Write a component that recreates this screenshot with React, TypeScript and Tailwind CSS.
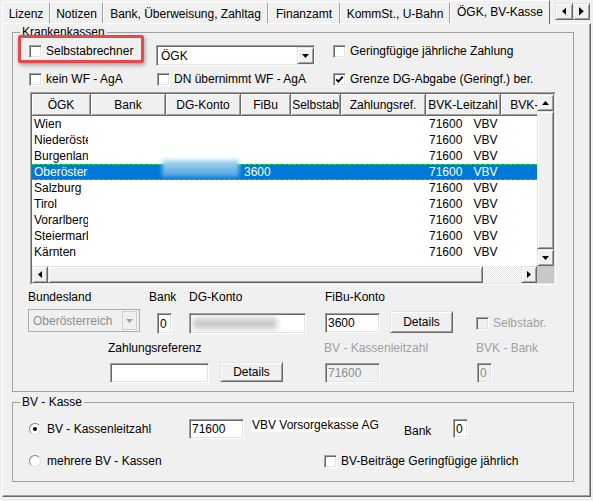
import React from "react";

const raised =
  "bg-[#f0f0f0] border border-t-[#e3e3e3] border-l-[#e3e3e3] border-r-[#696969] border-b-[#696969] shadow-[inset_1px_1px_0_#fff,inset_-1px_-1px_0_#a0a0a0]";
const sunken =
  "border border-t-[#a0a0a0] border-l-[#a0a0a0] border-r-white border-b-white shadow-[inset_1px_1px_0_#696969,inset_-1px_-1px_0_#e3e3e3]";

type Dir = "up" | "down" | "left" | "right";

function Arrow({ dir, big = false, color = "#000" }: { dir: Dir; big?: boolean; color?: string }) {
  const vertical = dir === "up" || dir === "down";
  const pts = {
    up: "0,4 7,4 3.5,0",
    down: "0,0 7,0 3.5,4",
    left: "4,0 4,7 0,3.5",
    right: "0,0 0,7 4,3.5",
  }[dir];
  const w = vertical ? 7 : 4;
  const h = vertical ? 4 : 7;
  const k = big ? 1.2 : 1;
  return (
    <svg width={w * k} height={h * k} viewBox={`0 0 ${w} ${h}`}>
      <polygon points={pts} fill={color} />
    </svg>
  );
}

function CheckBox({ checked = false, disabled = false }: { checked?: boolean; disabled?: boolean }) {
  return (
    <span
      className={`w-[13px] h-[13px] shrink-0 flex items-center justify-center ${sunken} ${
        disabled ? "bg-[#f0f0f0]" : "bg-white"
      }`}
    >
      {checked && (
        <svg width="9" height="9" viewBox="0 0 9 9">
          <path d="M1.2 4.3 L3.4 6.6 L7.8 1.6" fill="none" stroke="#000" strokeWidth="1.8" />
        </svg>
      )}
    </span>
  );
}

function CheckItem({ label, checked, disabled }: { label: string; checked?: boolean; disabled?: boolean }) {
  return (
    <div className="flex items-center h-[14px] whitespace-nowrap">
      <CheckBox checked={checked} disabled={disabled} />
      <span className={`ml-[4px] ${disabled ? "text-[#a0a0a0]" : ""}`}>{label}</span>
    </div>
  );
}

function RadioItem({ label, checked }: { label: string; checked?: boolean }) {
  return (
    <div className="flex items-center h-[14px] whitespace-nowrap">
      <span className="w-[12px] h-[12px] shrink-0 rounded-full bg-white border border-t-[#808080] border-l-[#808080] border-r-[#e3e3e3] border-b-[#e3e3e3] flex items-center justify-center">
        {checked && <span className="w-[4px] h-[4px] rounded-full bg-black" />}
      </span>
      <span className="ml-[6px]">{label}</span>
    </div>
  );
}

const tabs = [
  { label: "Lizenz", w: "w-[48px]" },
  { label: "Notizen", w: "w-[53px]" },
  { label: "Bank, Überweisung, Zahltag", w: "w-[165px]" },
  { label: "Finanzamt", w: "w-[72px]" },
  { label: "KommSt., U-Bahn", w: "w-[110px]" },
];

const cols = [
  { label: "ÖGK", w: "w-[59px]" },
  { label: "Bank", w: "w-[75px]" },
  { label: "DG-Konto", w: "w-[75px]" },
  { label: "FiBu", w: "w-[50px]" },
  { label: "Selbstab", w: "w-[50px]" },
  { label: "Zahlungsref.", w: "w-[85px]" },
  { label: "BVK-Leitzahl", w: "w-[75px]" },
  { label: "BVK-Bank", w: "w-[75px]" },
];

const kassen = [
  "Wien",
  "Niederösterreich",
  "Burgenland",
  "Oberösterreich",
  "Salzburg",
  "Tirol",
  "Vorarlberg",
  "Steiermark",
  "Kärnten",
];

function KassenGrid() {
  return (
    <div className="ml-[17px] mt-[5px] w-[526px] h-[193px] border border-t-[#a0a0a0] border-l-[#a0a0a0] border-r-white border-b-white">
      <div className="w-full h-full flex flex-col border border-t-[#696969] border-l-[#696969] border-r-[#e3e3e3] border-b-[#e3e3e3] bg-white">
        <div className="flex h-[172px] shrink-0">
          <div className="w-[505px] h-full overflow-hidden flex flex-col bg-white">
            <div className="flex h-[22px] shrink-0 bg-[#f0f0f0]">
              {cols.map((c) => (
                <div
                  key={c.label}
                  className={`${c.w} h-full shrink-0 flex items-center justify-center overflow-hidden whitespace-nowrap border-r border-b border-r-[#696969] border-b-[#696969] shadow-[inset_1px_1px_0_#fff,inset_-1px_-1px_0_#a0a0a0]`}
                >
                  {c.label}
                </div>
              ))}
            </div>
            {kassen.map((name, i) => {
              const sel = i === 3;
              return (
                <div
                  key={name}
                  className={`relative flex items-center h-[16px] shrink-0 ${
                    sel ? "bg-[#0078d7] text-white border-y border-dashed border-[#1fe01f]" : ""
                  }`}
                >
                  <div className="w-[59px] shrink-0 pl-[2px]">
                    <div className="w-[54px] overflow-hidden whitespace-nowrap">{name}</div>
                  </div>
                  <div className="w-[75px] shrink-0" />
                  <div className="w-[75px] shrink-0" />
                  <div className="w-[50px] shrink-0 pl-[3px]">{sel ? "3600" : ""}</div>
                  <div className="w-[50px] shrink-0" />
                  <div className="w-[85px] shrink-0" />
                  <div className="w-[75px] shrink-0 pl-[3px] whitespace-nowrap">
                    71600<span className="ml-[11px]">VBV</span>
                  </div>
                  <div className="w-[75px] shrink-0" />
                  {sel && (
                    <div className="absolute left-[130px] top-[-5px] w-[77px] h-[17px] bg-linear-to-b from-[#a9dbee] to-[#4c9fe0] blur-[2px]" />
                  )}
                </div>
              );
            })}
          </div>
          <div className="w-[17px] h-full flex flex-col bg-[#f0f0f0]">
            <div className={`h-[17px] shrink-0 ${raised} flex items-center justify-center`}>
              <Arrow dir="up" />
            </div>
            <div className={`flex-1 ${raised}`} />
            <div className={`h-[17px] shrink-0 ${raised} flex items-center justify-center`}>
              <Arrow dir="down" />
            </div>
          </div>
        </div>
        <div className="flex h-[17px] shrink-0 bg-[#f0f0f0]">
          <div className={`w-[16px] shrink-0 ${raised} flex items-center justify-center`}>
            <Arrow dir="left" />
          </div>
          <div className={`w-[435px] shrink-0 ${raised}`} />
          <div className="w-[38px] shrink-0 bg-[repeating-conic-gradient(#e6e6e6_0_25%,#ffffff_0_50%)] bg-[length:2px_2px]" />
          <div className={`w-[16px] shrink-0 ${raised} flex items-center justify-center`}>
            <Arrow dir="right" />
          </div>
          <div className="w-[17px] shrink-0 bg-[#c8c8c8]" />
        </div>
      </div>
    </div>
  );
}

export default function App() {
  return (
    <div className="relative w-[593px] h-[501px] overflow-hidden bg-[#f0f0f0] text-[12px] leading-[14px] text-black font-['Liberation_Sans',Arial,sans-serif] select-none">
      {/* Registerkarten */}
      <div className="flex items-end h-[23px] pl-[2px]">
        {tabs.map((t) => (
          <div
            key={t.label}
            className={`${t.w} h-[21px] shrink-0 flex items-center justify-center pt-[2px] whitespace-nowrap border-t border-l border-r border-t-white border-l-white border-r-[#a0a0a0]`}
          >
            {t.label}
          </div>
        ))}
        <div className="relative z-10 w-[100px] h-[24px] -mb-px shrink-0 flex items-center justify-center pb-[1px] whitespace-nowrap bg-[#f0f0f0] border-t border-l border-r border-t-white border-l-white border-r-[#696969]">
          ÖGK, BV-Kasse
        </div>
        <div className="self-start mt-[3px] ml-[5px] flex">
          <div className={`w-[18px] h-[17px] ${raised} flex items-center justify-center`}>
            <Arrow dir="left" big />
          </div>
          <div className={`w-[17px] h-[17px] ${raised} flex items-center justify-center`}>
            <Arrow dir="right" big />
          </div>
        </div>
      </div>

      {/* Seite */}
      <div className="ml-[2px] w-[589px] h-[474px] border border-t-white border-l-white border-r-[#696969] border-b-[#696969] shadow-[inset_-1px_-1px_0_#a0a0a0]">
        <fieldset className="ml-[9px] mt-[1px] w-[562px] h-[367px] border border-[#a0a0a0]">
          <legend className="ml-[7px] px-[2px] leading-[14px]">Krankenkassen</legend>

          <div className="flex items-start h-[24px] mt-[4px]">
            <div className="w-[143px] shrink-0 pl-[16px] mt-[1px]">
              <CheckItem label="Selbstabrechner" />
            </div>
            <div className="w-[177px] shrink-0 mt-[2px]">
              <div className={`w-[159px] h-[21px] bg-white ${sunken} flex items-center`}>
                <span className="flex-1 pl-[4px]">ÖGK</span>
                <div className={`w-[17px] h-[17px] ${raised} flex items-center justify-center`}>
                  <Arrow dir="down" />
                </div>
              </div>
            </div>
            <div className="mt-[1px]">
              <CheckItem label="Geringfügige jährliche Zahlung" />
            </div>
          </div>

          <div className="flex items-start h-[20px]">
            <div className="w-[144px] shrink-0 pl-[16px] mt-[5px]">
              <CheckItem label="kein WF - AgA" />
            </div>
            <div className="w-[176px] shrink-0 mt-[5px]">
              <CheckItem label="DN übernimmt WF - AgA" />
            </div>
            <div className="mt-[5px]">
              <CheckItem label="Grenze DG-Abgabe (Geringf.) ber." checked />
            </div>
          </div>

          <KassenGrid />

          <div className="flex h-[14px] mt-[5px] whitespace-nowrap">
            <div className="ml-[15px] w-[121px] shrink-0">Bundesland</div>
            <div className="w-[40px] shrink-0">Bank</div>
            <div className="w-[136px] shrink-0">DG-Konto</div>
            <div>FiBu-Konto</div>
          </div>

          <div className="flex items-start h-[25px] mt-[5px]">
            <div className="ml-[15px] w-[112px] h-[23px] shrink-0 flex items-center border border-[#adadad] bg-[#f0f0f0] pr-[2px]">
              <span className="flex-1 pl-[4px] text-[#8d8d8d] whitespace-nowrap">Oberösterreich</span>
              <div className="w-[15px] h-[19px] border border-[#cfcfcf] flex items-center justify-center">
                <Arrow dir="down" color="#a0a0a0" />
              </div>
            </div>
            <div className={`ml-[17px] mt-[4px] w-[15px] h-[21px] shrink-0 bg-white ${sunken} flex items-center pl-[2px]`}>
              0
            </div>
            <div className={`ml-[17px] mt-[4px] w-[117px] h-[21px] shrink-0 bg-white ${sunken} flex items-center overflow-hidden`}>
              <div className="ml-[3px] w-[84px] h-[11px] bg-[#c6c6c6] blur-[3px]" />
            </div>
            <div className={`ml-[19px] mt-[4px] w-[55px] h-[20px] shrink-0 bg-white ${sunken} flex items-center pl-[2px]`}>
              3600
            </div>
            <div className={`ml-[10px] mt-[2px] w-[63px] h-[22px] shrink-0 ${raised} flex items-center justify-center`}>
              Details
            </div>
            <div className="ml-[23px] mt-[7px]">
              <CheckItem label="Selbstabr." disabled />
            </div>
          </div>

          <div className="flex h-[14px] mt-[7px] whitespace-nowrap">
            <div className="ml-[95px] w-[216px] shrink-0">Zahlungsreferenz</div>
            <div className="w-[152px] shrink-0 text-[#a0a0a0]">BV - Kassenleitzahl</div>
            <div className="text-[#a0a0a0]">BVK - Bank</div>
          </div>

          <div className="flex items-start h-[21px] mt-[7px]">
            <div className={`ml-[97px] mt-[1px] w-[99px] h-[20px] shrink-0 bg-white ${sunken}`} />
            <div className={`ml-[11px] w-[63px] h-[20px] shrink-0 ${raised} flex items-center justify-center`}>
              Details
            </div>
            <div className={`ml-[42px] mt-[1px] w-[55px] h-[20px] shrink-0 bg-[#f0f0f0] ${sunken} flex items-center pl-[2px] text-[#8d8d8d]`}>
              71600
            </div>
            <div className={`ml-[97px] mt-[1px] w-[15px] h-[20px] shrink-0 bg-[#f0f0f0] ${sunken} flex items-center pl-[2px] text-[#8d8d8d]`}>
              0
            </div>
          </div>
        </fieldset>

        <fieldset className="ml-[9px] mt-[3px] w-[562px] h-[87px] border border-[#a0a0a0]">
          <legend className="ml-[7px] px-[2px] leading-[14px]">BV - Kasse</legend>

          <div className="flex items-start h-[21px] mt-[9px]">
            <div className="ml-[16px] mt-[4px] w-[160px] shrink-0">
              <RadioItem label="BV - Kassenleitzahl" checked />
            </div>
            <div className={`mt-[1px] w-[55px] h-[20px] shrink-0 bg-white ${sunken} flex items-center pl-[2px]`}>
              71600
            </div>
            <div className="ml-[7px] w-[126px] h-[14px] shrink-0 bg-white pl-[1px] whitespace-nowrap">
              VBV Vorsorgekasse AG
            </div>
            <div className="ml-[27px] mt-[6px] w-[49px] shrink-0">Bank</div>
            <div className={`mt-[1px] w-[15px] h-[19px] shrink-0 bg-white ${sunken} flex items-center pl-[2px]`}>
              0
            </div>
          </div>

          <div className="flex items-start h-[14px] mt-[15px]">
            <div className="ml-[16px] w-[295px] shrink-0">
              <RadioItem label="mehrere BV - Kassen" />
            </div>
            <CheckItem label="BV-Beiträge Geringfügige jährlich" />
          </div>
        </fieldset>
      </div>

      {/* Markierung */}
      <div className="absolute left-[18px] top-[35px] w-[126px] h-[28px] border-[3px] border-[#e8474b] rounded-[2px] shadow-[1px_2px_4px_rgba(0,0,0,0.35)]" />
    </div>
  );
}
